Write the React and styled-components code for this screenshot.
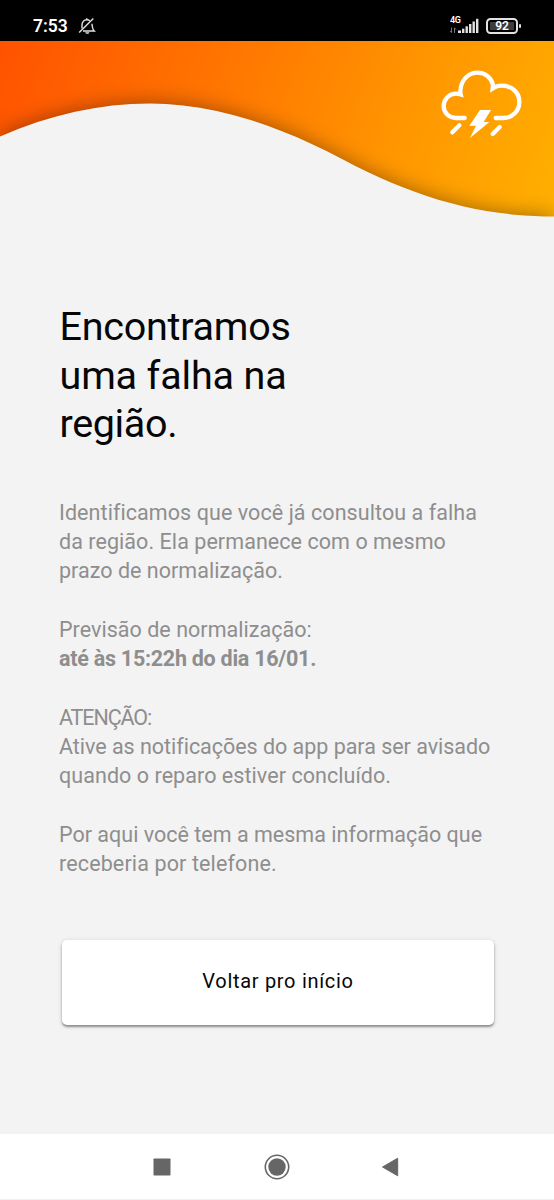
import React from "react"
import styled, { createGlobalStyle } from "styled-components"

const color = {
  background: "#f3f3f3",
  text: "#8e8e8e",
  title: "#060606",
  white: "#ffffff",
  nav: "#666666",
  status: "#e2e2e2",
}

const GlobalStyle = createGlobalStyle`
  * {
    box-sizing: border-box;
  }

  body {
    margin: 0;
    background: ${color.background};
    font-family: Roboto, "Liberation Sans", sans-serif;
  }
`

const Screen = styled.div`
  display: flex;
  flex-direction: column;
  width: 554px;
  height: 1200px;
  overflow: hidden;
  background: ${color.background};
`

const StatusBar = styled.div`
  display: flex;
  align-items: center;
  justify-content: space-between;
  flex: none;
  height: 41px;
  padding: 10px 36px 0 33px;
  background: #000;
  color: ${color.white};
`

const StatusGroup = styled.div`
  display: flex;
  align-items: center;
  gap: ${({ $gap }) => $gap}px;

  svg {
    display: block;
  }
`

const Clock = styled.span`
  font-size: 17.5px;
  line-height: 20px;
  font-weight: 600;
`

const Network = styled.div`
  display: grid;
  grid-template-columns: 9px 21px;
  height: 18px;

  svg {
    margin-left: -9px;
  }
`

const NetworkType = styled.span`
  font-size: 9px;
  line-height: 7px;
  font-weight: 600;
  letter-spacing: -0.3px;
`

const Battery = styled.div`
  position: relative;
  display: flex;
  align-items: center;
  justify-content: center;
  width: 32px;
  height: 16px;
  border: 2px solid ${color.status};
  border-radius: 4.5px;
  background: linear-gradient(#3c3c3c, #3c3c3c) center / 24px 8px no-repeat;
  font-size: 12px;
  line-height: 12px;
  font-weight: 600;

  &::after {
    content: "";
    position: absolute;
    right: -5px;
    top: 4px;
    width: 2px;
    height: 4px;
    border-radius: 1px;
    background: ${color.status};
  }
`

const Header = styled.header`
  position: relative;
  flex: none;
  height: 176px;
  background: linear-gradient(113deg, #ff5200 0%, #ff7800 40%, #ff9800 72%, #ffb000 100%);
`

const Wave = styled.svg`
  display: block;
  width: 554px;
  height: 176px;

  path {
    fill: ${color.background};
    filter: drop-shadow(0 -1px 10px rgba(0, 0, 0, 0.36));
  }
`

const Storm = styled.svg`
  position: absolute;
  top: 26.7px;
  right: 31px;
  width: 83px;
  height: 73px;
`

const Content = styled.main`
  flex: 1;
  padding: 86px 60px 0 59px;
`

const Title = styled.h1`
  margin: 0;
  padding-left: 0.5px;
  color: ${color.title};
  font-size: 39.5px;
  line-height: 48.7px;
  font-weight: 400;
`

const Text = styled.p`
  margin: ${({ $top }) => $top || 29.3}px 0 0;
  color: ${color.text};
  font-size: 21.5px;
  line-height: 29.3px;
`

const Line = styled.span`
  display: block;
  white-space: nowrap;
  font-weight: ${({ $bold }) => ($bold ? 700 : "inherit")};
  letter-spacing: ${({ $spacing }) => $spacing || 0}px;
`

const Button = styled.button`
  display: block;
  width: 432px;
  height: 85px;
  margin: 61.3px 0 0 3px;
  padding: 0 0 2px;
  border: 0;
  border-radius: 5px;
  background: ${color.white};
  box-shadow: 0 2px 2px rgba(0, 0, 0, 0.34), 0 1px 5px rgba(0, 0, 0, 0.16);
  color: ${color.title};
  font-family: inherit;
  font-size: 20px;
  letter-spacing: 0.7px;
`

const NavBar = styled.nav`
  display: flex;
  flex: none;
  align-items: center;
  justify-content: space-between;
  height: 66px;
  padding: 0 155px 0 153px;
  border-bottom: 1px solid #f0f0f0;
  background: ${color.white};
`

const BellOff = () => (
  <svg width="18" height="18" viewBox="0 0 18 18" fill="none" stroke={color.status} strokeWidth="1.4">
    <path d="M4 11.5V8c0-3 2-5.2 4.8-5.2 1.2 0 2.2.3 3 1M14 6.8c.2 4.2.5 5.5 2.3 7.2H5" />
    <path d="M1.2 15.5 15.3 1.6" />
    <path d="M7.3 15.2h4c0 2-4 2-4 0Z" fill={color.status} stroke="none" />
    <path d="M8.8 2.8V1.2" />
  </svg>
)

const Signal = () => (
  <svg width="30" height="18" viewBox="0 0 30 18">
    <path d="M1.5 10.5v5M4.5 16v-5M0 14 1.5 15.7M4.5 10.8 6 12.5" stroke="#777" fill="none" />
    <g fill={color.status}>
      <rect x="8" y="13.5" width="3" height="2.5" />
      <rect x="12" y="11.7" width="2.4" height="4.3" />
      <rect x="15.5" y="9.3" width="2.4" height="6.7" />
      <rect x="19" y="7" width="2.4" height="9" />
      <rect x="22.5" y="4.5" width="2.4" height="11.5" />
      <rect x="26" y="1.8" width="2.4" height="14.2" />
    </g>
  </svg>
)

const StormIcon = () => (
  <Storm viewBox="60 203 249 219" fill="none" stroke={color.white} strokeWidth="13" strokeLinecap="round">
    <path d="M134 353H108C87 353 71 337 71 317C71 296 88 280 108 280Q115 280 122 282Q120 274 122 264C126 236 147 217 173 217C196 217 214 232 219 254L218 264Q230 256 246 256C276 256 298 277 298 304C298 332 278 353 250 353H227" />
    <path d="M118 375 97 396M239 380 218 401" />
    <path d="M180 329H213L191 365H208L150 413 168 376H148Z" fill={color.white} stroke="none" />
  </Storm>
)

const App = () => (
  <>
    <GlobalStyle />
    <Screen>
      <StatusBar>
        <StatusGroup $gap={10}>
          <Clock>7:53</Clock>
          <BellOff />
        </StatusGroup>
        <StatusGroup $gap={6}>
          <Network>
            <NetworkType>4G</NetworkType>
            <Signal />
          </Network>
          <Battery>92</Battery>
        </StatusGroup>
      </StatusBar>
      <Header>
        <Wave viewBox="0 0 554 176">
          <path d="M0 95.5C50 73.5 100 62.5 150 62.5C210 62.5 275 82 343 118.5C410 154 475 175.5 554 175.5V200H0Z" />
        </Wave>
        <StormIcon />
      </Header>
      <Content>
        <Title>
          <Line $spacing={-0.25}>Encontramos</Line>
          <Line $spacing={-0.15}>uma falha na</Line>
          <Line $spacing={-0.35}>região.</Line>
        </Title>
        <Text $top={48.7}>
          <Line $spacing={0.07}>Identificamos que você já consultou a falha</Line>
          <Line $spacing={0.06}>da região. Ela permanece com o mesmo</Line>
          <Line $spacing={0.03}>prazo de normalização.</Line>
        </Text>
        <Text>
          <Line $spacing={0.03}>Previsão de normalização:</Line>
          <Line $bold $spacing={-0.26}>até às 15:22h do dia 16/01.</Line>
        </Text>
        <Text>
          <Line $spacing={-1.1}>ATENÇÃO:</Line>
          <Line $spacing={-0.03}>Ative as notificações do app para ser avisado</Line>
          <Line $spacing={0.06}>quando o reparo estiver concluído.</Line>
        </Text>
        <Text>
          <Line $spacing={0.01}>Por aqui você tem a mesma informação que</Line>
          <Line $spacing={0.13}>receberia por telefone.</Line>
        </Text>
        <Button>Voltar pro início</Button>
      </Content>
      <NavBar>
        <svg width="18" height="18" viewBox="0 0 18 18">
          <rect x="0.5" y="0.5" width="17" height="17" rx="0.8" fill={color.nav} />
        </svg>
        <svg width="28" height="26" viewBox="0 0 28 26">
          <circle cx="15" cy="13" r="11.7" fill="none" stroke={color.nav} strokeWidth="1.6" />
          <circle cx="15" cy="13" r="8.7" fill={color.nav} />
        </svg>
        <svg width="18" height="20" viewBox="0 0 18 20">
          <path d="M1.5 10 16.7 1.2V18.8Z" fill={color.nav} stroke={color.nav} strokeLinejoin="round" />
        </svg>
      </NavBar>
    </Screen>
  </>
)

export default App
